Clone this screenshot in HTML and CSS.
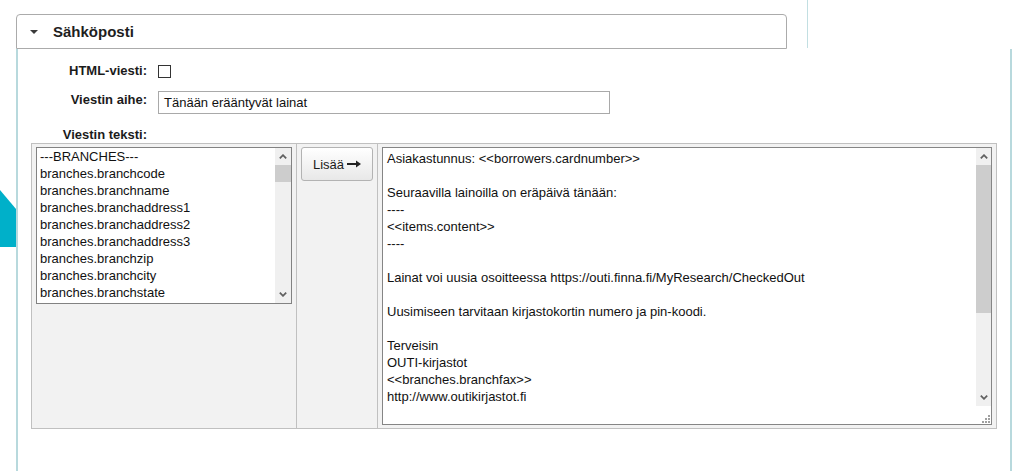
FILE: index.html
```html
<!DOCTYPE html>
<html lang="fi">
<head>
<meta charset="utf-8">
<title>Sähköposti</title>
<link rel="stylesheet" href="styles.css">
</head>
<body>
<div class="deco-shape"></div>
<div class="toprow">
  <div class="section-head">
    <span class="caret"></span>
    <span class="section-title">Sähköposti</span>
  </div>
  <div class="top-rule"></div>
</div>
<div class="panel">
  <div class="form-row row-html">
    <label class="lbl">HTML-viesti:</label>
    <span class="checkbox"></span>
  </div>
  <div class="form-row row-subject">
    <label class="lbl">Viestin aihe:</label>
    <div class="textinput">Tänään erääntyvät lainat</div>
  </div>
  <div class="form-row row-body">
    <label class="lbl">Viestin teksti:</label>
  </div>
  <div class="editor">
    <div class="cell cell-list">
      <div class="listbox">
        <div class="list-items">
          <div class="opt">---BRANCHES---</div>
          <div class="opt">branches.branchcode</div>
          <div class="opt">branches.branchname</div>
          <div class="opt">branches.branchaddress1</div>
          <div class="opt">branches.branchaddress2</div>
          <div class="opt">branches.branchaddress3</div>
          <div class="opt">branches.branchzip</div>
          <div class="opt">branches.branchcity</div>
          <div class="opt">branches.branchstate</div>
        </div>
        <div class="vscroll vscroll-list">
          <div class="sbtn"><svg width="8" height="5" viewBox="0 0 8 5"><polyline points="0.8,4.3 4,1.2 7.2,4.3" fill="none" stroke="#606060" stroke-width="1.8"/></svg></div>
          <div class="track"><div class="thumb thumb-list"></div></div>
          <div class="sbtn"><svg width="8" height="5" viewBox="0 0 8 5"><polyline points="0.8,0.7 4,3.8 7.2,0.7" fill="none" stroke="#606060" stroke-width="1.8"/></svg></div>
        </div>
      </div>
    </div>
    <div class="cell cell-btn">
      <button class="add-btn" type="button">Lisää <svg class="arrow" width="14" height="8" viewBox="0 0 14 8"><line x1="0" y1="4" x2="10" y2="4" stroke="#222" stroke-width="2"/><polygon points="9,0.5 14,4 9,7.5" fill="#222"/></svg></button>
    </div>
    <div class="cell cell-text">
      <div class="textarea">
        <div class="ta-text">
          <div class="ln">Asiakastunnus: &lt;&lt;borrowers.cardnumber&gt;&gt;</div>
          <div class="ln">&nbsp;</div>
          <div class="ln">Seuraavilla lainoilla on eräpäivä tänään:</div>
          <div class="ln">----</div>
          <div class="ln">&lt;&lt;items.content&gt;&gt;</div>
          <div class="ln">----</div>
          <div class="ln">&nbsp;</div>
          <div class="ln">Lainat voi uusia osoitteessa https://outi.finna.fi/MyResearch/CheckedOut</div>
          <div class="ln">&nbsp;</div>
          <div class="ln">Uusimiseen tarvitaan kirjastokortin numero ja pin-koodi.</div>
          <div class="ln">&nbsp;</div>
          <div class="ln">Terveisin</div>
          <div class="ln">OUTI-kirjastot</div>
          <div class="ln">&lt;&lt;branches.branchfax&gt;&gt;</div>
          <div class="ln">http://www.outikirjastot.fi</div>
        </div>
        <div class="ta-side">
          <div class="vscroll vscroll-ta">
            <div class="sbtn"><svg width="8" height="5" viewBox="0 0 8 5"><polyline points="0.8,4.3 4,1.2 7.2,4.3" fill="none" stroke="#606060" stroke-width="1.8"/></svg></div>
            <div class="track"><div class="thumb thumb-ta"></div></div>
            <div class="sbtn"><svg width="8" height="5" viewBox="0 0 8 5"><polyline points="0.8,0.7 4,3.8 7.2,0.7" fill="none" stroke="#606060" stroke-width="1.8"/></svg></div>
          </div>
          <div class="grip">
            <svg width="9" height="9" viewBox="0 0 9 9">
              <rect x="7" y="1" width="2" height="2" fill="#a0a0a0"/>
              <rect x="4" y="4" width="2" height="2" fill="#a0a0a0"/>
              <rect x="7" y="4" width="2" height="2" fill="#a0a0a0"/>
              <rect x="1" y="7" width="2" height="2" fill="#a0a0a0"/>
              <rect x="4" y="7" width="2" height="2" fill="#a0a0a0"/>
              <rect x="7" y="7" width="2" height="2" fill="#a0a0a0"/>
            </svg>
          </div>
        </div>
      </div>
    </div>
  </div>
</div>
</body>
</html>
```

FILE: styles.css
```css
html, body {
  margin: 0;
  padding: 0;
  background: #ffffff;
}
body {
  font-family: "Liberation Sans", Arial, sans-serif;
  font-size: 13px;
  color: #111;
  width: 1020px;
  height: 471px;
  overflow: hidden;
  position: relative;
}

.deco-shape {
  position: absolute;
  left: 0;
  top: 190px;
  width: 16px;
  height: 57px;
  background: #00b0c9;
  clip-path: polygon(0 0, 100% 19px, 100% 100%, 0 100%);
}

.toprow {
  display: flex;
  height: 49px;
}
.section-head {
  margin-top: 14px;
  margin-left: 16px;
  width: 771px;
  height: 35px;
  box-sizing: border-box;
  border: 1px solid #ababab;
  border-radius: 4px 4px 0 0;
  display: flex;
  align-items: center;
}
.caret {
  width: 0;
  height: 0;
  margin-left: 13px;
  border-left: 4px solid transparent;
  border-right: 4px solid transparent;
  border-top: 4px solid #3a3a3a;
}
.section-title {
  margin-left: 15px;
  font-weight: bold;
  font-size: 15px;
  color: #1e1e1e;
  line-height: 18px;
}
.top-rule {
  margin-left: 20px;
  width: 1px;
  height: 48px;
  background: #c2dfe2;
}

.panel {
  margin-left: 16px;
  width: 996px;
  height: 422px;
  box-sizing: border-box;
  padding-top: 13px;
  border-left: 2px solid #b8d9dd;
  border-right: 2px solid #b8d9dd;
}

.form-row {
  display: flex;
  align-items: flex-start;
  gap: 11px;
}
.lbl {
  width: 129px;
  text-align: right;
  font-weight: bold;
  font-size: 13px;
  line-height: 18px;
  color: #1b1b1b;
}
.row-html {
  align-items: center;
  height: 18px;
}
.checkbox {
  width: 13px;
  height: 13px;
  box-sizing: border-box;
  border: 1px solid #333;
  background: #fff;
}
.row-subject {
  margin-top: 11px;
}
.textinput {
  width: 452px;
  height: 23px;
  box-sizing: border-box;
  border: 1px solid #a9a9a9;
  padding: 0 0 0 5px;
  line-height: 21px;
  font-size: 13px;
  color: #111;
}
.row-body {
  margin-top: 13px;
}
.row-body .lbl {
  line-height: 16px;
}

.editor {
  margin-left: 13px;
  width: 966px;
  height: 286px;
  box-sizing: border-box;
  border: 1px solid #c0c0c0;
  background: #f2f2f2;
  display: flex;
}
.cell {
  padding: 3px 4px;
  height: 100%;
  box-sizing: border-box;
}
.cell-list {
  width: 265px;
  border-right: 1px solid #c0c0c0;
}
.cell-btn {
  width: 81px;
  border-right: 1px solid #c0c0c0;
}
.cell-text {
  width: 618px;
}

.listbox {
  width: 256px;
  height: 157px;
  box-sizing: border-box;
  border: 1px solid #828282;
  background: #fff;
  display: flex;
}
.list-items {
  flex: 1;
  padding-left: 3px;
}
.opt {
  height: 17px;
  line-height: 17px;
  white-space: nowrap;
  color: #111;
}

.vscroll {
  display: flex;
  flex-direction: column;
  background: #f0f0f0;
}
.vscroll-list {
  width: 16px;
}
.vscroll-ta {
  width: 15px;
  flex: 1;
}
.sbtn {
  height: 17px;
  display: flex;
  align-items: center;
  justify-content: center;
  flex: none;
}
.track {
  flex: 1;
}
.thumb {
  background: #cdcdcd;
}
.thumb-list {
  height: 17px;
}
.thumb-ta {
  height: 148px;
}

.add-btn {
  width: 72px;
  height: 34px;
  box-sizing: border-box;
  border: 1px solid #b3b3b3;
  border-radius: 3px;
  background: linear-gradient(#ffffff, #e8e8e8);
  font-family: "Liberation Sans", Arial, sans-serif;
  font-size: 13px;
  color: #1b1b1b;
  padding: 0;
  display: flex;
  align-items: center;
  justify-content: center;
  gap: 3px;
}
.arrow {
  display: block;
}

.textarea {
  width: 610px;
  height: 278px;
  box-sizing: border-box;
  border: 1px solid #858585;
  background: #fff;
  display: flex;
}
.ta-text {
  flex: 1;
  padding: 2px 4px;
  overflow: hidden;
}
.ln {
  height: 17px;
  line-height: 17px;
  white-space: nowrap;
  color: #111;
}
.ta-side {
  width: 15px;
  display: flex;
  flex-direction: column;
}
.grip {
  height: 17px;
  background: #fff;
  display: flex;
  align-items: flex-end;
  justify-content: flex-end;
  padding: 0 1px 1px 0;
}
.grip svg {
  display: block;
}
```
